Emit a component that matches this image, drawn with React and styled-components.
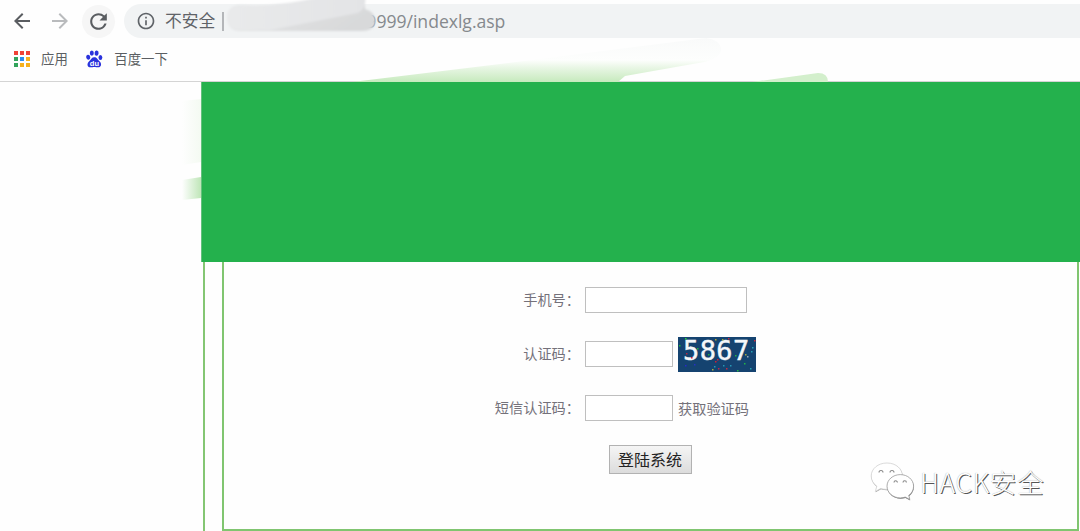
import styled, { createGlobalStyle } from 'styled-components';
import { MdArrowBack, MdArrowForward, MdRefresh, MdInfoOutline } from 'react-icons/md';

const GlobalStyle = createGlobalStyle`
  * {
    box-sizing: border-box;
  }

  body {
    margin: 0;
    background-color: #fefefe;
    font-family: 'Noto Sans', 'Noto Sans CJK SC', sans-serif;
    overflow: hidden;
  }
`;

const Window = styled.div`
  position: relative;
  display: flex;
  flex-direction: column;
  height: 531px;
  overflow: hidden;
`;

const Toolbar = styled.div`
  display: flex;
  align-items: center;
  height: 38px;
  padding: 4px 0 0 10px;
  flex-shrink: 0;
`;

const NavButton = styled.button`
  display: flex;
  align-items: center;
  justify-content: center;
  width: ${(props) => (props.$round ? '33px' : '24px')};
  height: 33px;
  margin-right: ${(props) => props.$gap}px;
  padding: 0;
  border: none;
  border-radius: 50%;
  background-color: ${(props) => (props.$round ? '#f6f6f6' : 'transparent')};
  color: ${(props) => (props.$muted ? '#b9bbbd' : '#5a5d61')};
`;

const AddressBar = styled.div`
  display: flex;
  align-items: center;
  flex: 1;
  height: 34px;
  padding-left: 12px;
  border-radius: 17px 0 0 17px;
  background-color: #f1f3f4;
  color: #5f6368;
`;

const Insecure = styled.span`
  margin-left: 9px;
  font-size: 16.8px;
  line-height: 34px;
  white-space: nowrap;
`;

const Divider = styled.i`
  width: 2px;
  height: 19px;
  margin-left: 7px;
  background-color: #b4b6b9;
`;

const Address = styled.span`
  margin-left: 142px;
  font-family: 'Open Sans', 'Noto Sans', sans-serif;
  font-size: 17.6px;
  line-height: 34px;
  letter-spacing: -0.02px;
  color: #85898d;
`;

const Bookmarks = styled.div`
  display: flex;
  align-items: center;
  height: 44px;
  padding: 0 0 1px 14px;
  border-bottom: 1px solid #d4d4d4;
  flex-shrink: 0;
`;

const Bookmark = styled.span`
  display: flex;
  align-items: center;
  gap: 11px;
  margin-right: 18.5px;
  font-size: 13.4px;
  line-height: 20px;
  color: #5b5e62;
`;

const AppsGrid = styled.span`
  display: grid;
  grid-template-columns: repeat(3, 4px);
  gap: 2px;
`;

const AppDot = styled.i`
  height: 4px;
  background-color: ${(props) => props.$color};
`;

const Page = styled.main`
  display: flex;
  flex-direction: column;
  flex: 1;
  margin-left: 201px;
`;

const Banner = styled.div`
  height: 180px;
  border-left: 1px solid #62c17c;
  background-color: #24b14d;
  flex-shrink: 0;
`;

const OuterFrame = styled.div`
  flex: 1;
  margin-left: 2px;
  padding: 0 1px 0 17px;
  border-left: 2px solid #84c673;
`;

const InnerFrame = styled.div`
  height: 269px;
  padding-top: 25px;
  border: 2px solid #80c570;
  border-top: none;
`;

const Form = styled.form`
  display: grid;
  grid-template-columns: 356px auto;
  grid-auto-rows: 26px;
  row-gap: 28px;
  column-gap: 5px;
`;

const Label = styled.label`
  font-family: 'Noto Sans CJK SC', sans-serif;
  font-size: 14.2px;
  font-weight: 400;
  line-height: 25px;
  color: #74717a;
  text-align: right;
  white-space: nowrap;
`;

const Field = styled.div`
  display: flex;
  align-items: center;
  gap: 5px;
`;

const Input = styled.input`
  width: ${(props) => props.$width}px;
  height: 26px;
  padding: 0 4px;
  border: 1px solid #bfbfbf;
  background-color: #fff;
  outline: none;
`;

const Captcha = styled.div`
  position: relative;
  width: 78px;
  height: 35px;
  background-color: #154370;
`;

const Digits = styled.span`
  display: block;
  padding-left: 5px;
  font-family: 'DejaVu Sans Mono', monospace;
  font-size: 27px;
  line-height: 27px;
  letter-spacing: 0.4px;
  color: #f4f7fa;
  -webkit-text-stroke: 0.4px #f4f7fa;
`;

const Noise = styled.svg`
  position: absolute;
  inset: 0;
`;

const Submit = styled.button`
  justify-self: start;
  grid-column: 2;
  width: 83px;
  height: 29px;
  margin: -4px 0 0 23.5px;
  padding: 0;
  border: 1px solid #b2b2b2;
  background: linear-gradient(#f5f5f5, #dcdcdc);
  font-family: 'Noto Sans CJK SC', sans-serif;
  font-size: 16px;
  line-height: 25px;
  color: #222;
`;

const Smear = styled.svg`
  position: absolute;
  left: 0;
  top: 0;
  pointer-events: none;
`;

const Watermark = styled.div`
  position: absolute;
  left: 868px;
  top: 460px;
  display: flex;
  align-items: flex-start;
  gap: 4px;
`;

const WatermarkText = styled.span`
  font-family: 'Noto Sans CJK SC', sans-serif;
  font-size: 26.6px;
  font-weight: 300;
  line-height: 44px;
  letter-spacing: 0.6px;
  color: #fff;
  text-shadow: 1px 1px 0 #555, 0 0 1px #999;
  white-space: nowrap;
`;

const dotColors = [
  '#ef4337', '#ef4337', '#ef4337',
  '#32a45b', '#2a8cf0', '#f6b01c',
  '#32a45b', '#f6b01c', '#f6b01c',
];

const specks = [
  [7, 1, '#23d43a'], [1, 8, '#18b43b'], [8, 16, '#b72941'], [13, 20, '#d31b36'],
  [7, 28, '#2727ce'], [16, 27, '#2631c4'], [19, 11, '#20b943'], [37, 2, '#b9a532'],
  [44, 2, '#a9aa2e'], [50, 1, '#c62841'], [37, 24, '#d31d35'], [39, 22, '#d31d35'],
  [36, 29, '#2699b1'], [40, 31, '#bd2547'], [45, 28, '#2794b2'], [52, 28, '#2797b5'],
  [57, 18, '#22b447'], [67, 17, '#a5a340'], [66, 26, '#23b545'], [72, 31, '#25a2b4'],
  [74, 10, '#28a4b6'], [76, 3, '#c92c40'], [73, 14, '#24a1b4'], [59, 33, '#26b546'],
  [34, 32, '#b0ab38'], [30, 17, '#23ad42'], [48, 31, '#c12d44'], [69, 19, '#9aa9b8'],
];

function BaiduIcon() {
  return (
    <svg width="17" height="18" viewBox="0 0 17 18">
      <g fill="#2a32dc">
        <ellipse cx="2.2" cy="7.2" rx="2" ry="2.5" transform="rotate(-10 2.2 7.2)" />
        <ellipse cx="5.8" cy="3.1" rx="2" ry="2.7" />
        <ellipse cx="10.6" cy="3.1" rx="2" ry="2.7" transform="rotate(8 10.6 3.1)" />
        <ellipse cx="14.4" cy="7.4" rx="1.9" ry="2.5" />
        <path d="M8.3 7.2c2.7 0 3 2.2 4.9 3.7 3.2 2.6 2 6.5-1.2 6.4-1.5 0-2.2-.4-3.7-.4s-2.2.5-3.8.4C.9 17.2.6 13.3 3.4 10.9 5.3 9.4 5.7 7.2 8.3 7.2z" />
      </g>
      <text x="8.4" y="15.5" fill="#fff" fontSize="7.5" fontWeight="700" fontFamily="Liberation Sans, sans-serif" textAnchor="middle">du</text>
    </svg>
  );
}

const bigBubble = 'M19 3C10 3 3.2 8.8 3.2 16c0 4.3 2.2 7.8 5.6 10.2L7.3 31.5l5.4-3c2 .6 4.1.9 6.3.9 9 0 15.5-5.9 15.5-13.2S28 3 19 3z';
const smallBubble = 'M32.3 14.6C25 14.6 19 19.7 19 26.2s6 11.7 13.3 11.7c1.8 0 3.4-.3 4.9-.8l4.7 2.4-1.2-4.1c2.9-2.1 4.9-5.4 4.9-9.2 0-6.5-6-11.6-13.3-11.6z';

function WechatIcon() {
  return (
    <svg width="48" height="44" viewBox="0 0 48 44">
      <path d={bigBubble} fill="#999" transform="translate(.3 .8)" />
      <path d={bigBubble} fill="#fff" stroke="#d0d0d0" strokeWidth="0.8" />
      <path d={smallBubble} fill="#777" transform="translate(.3 .9)" />
      <path d={smallBubble} fill="#fff" stroke="#999" strokeWidth="0.8" />
      <path
        d="M11 12.5a2 2 0 0 1 4 0M22 12.5a2 2 0 0 1 4 0M26 22.5a1.6 1.6 0 0 1 3.4 0M35 22.5a1.6 1.6 0 0 1 3.4 0"
        fill="none"
        stroke="#888"
        strokeWidth="1.1"
      />
    </svg>
  );
}

function BrushMarks() {
  return (
    <Smear width="1080" height="263" viewBox="0 0 1080 263">
      <defs>
        <filter id="soft">
          <feGaussianBlur stdDeviation="1" />
        </filter>
        <linearGradient id="grey" x1="0" y1="0" x2="1" y2="0.3">
          <stop offset="0" stopColor="#eaebec" />
          <stop offset="0.6" stopColor="#dedfe0" />
          <stop offset="1" stopColor="#d8d9da" />
        </linearGradient>
        <linearGradient id="greyTop" x1="0" y1="0" x2="1" y2="0">
          <stop offset="0" stopColor="#e9eaeb" />
          <stop offset="1" stopColor="#e3e4e6" />
        </linearGradient>
        <linearGradient id="green" gradientUnits="userSpaceOnUse" x1="0" y1="38" x2="0" y2="82">
          <stop offset="0" stopColor="#f9fafa" />
          <stop offset="0.5" stopColor="#fdfefd" />
          <stop offset="0.68" stopColor="#e8f6e4" />
          <stop offset="1" stopColor="#c6eabd" />
        </linearGradient>
        <linearGradient id="side" x1="0" y1="0" x2="1" y2="0">
          <stop offset="0" stopColor="#fefefe" />
          <stop offset="1" stopColor="#bfe6b8" />
        </linearGradient>
        <linearGradient id="sideFaint" x1="0" y1="0" x2="1" y2="0">
          <stop offset="0" stopColor="#fefefe" />
          <stop offset="1" stopColor="#f4faf2" />
        </linearGradient>
      </defs>
      <g filter="url(#soft)">
        <path d="M227 18Q227 6 240 5Q272 8 320 0H365V9Q375 12 375 20Q375 31 362 31H240Q228 31 227 18z" fill="url(#grey)" />
        <path d="M227 18Q227 6 240 5Q272 8 320 -3H365Q367 8 358 13L270 30H240Q228 30 227 18z" fill="url(#greyTop)" />
      </g>
      <path d="M352 82L500 64L706 38Q721 40 721 50Q720 58 704 62L625 76L618 82z" fill="url(#green)" />
      <path d="M752 82L818 73Q828 73 828 82z" fill="#d3efcc" />
      <path d="M182 101L201 99V162L182 165z" fill="url(#sideFaint)" />
      <path d="M182 180L201 177V198L182 200z" fill="url(#side)" />
    </Smear>
  );
}

function BrowserChrome() {
  return (
    <>
      <Toolbar>
        <NavButton $gap={14}><MdArrowBack size={24} /></NavButton>
        <NavButton $gap={10} $muted><MdArrowForward size={24} /></NavButton>
        <NavButton $gap={9} $round><MdRefresh size={25} /></NavButton>
        <AddressBar>
          <MdInfoOutline size={20} />
          <Insecure>不安全</Insecure>
          <Divider />
          <Address>9999/indexlg.asp</Address>
        </AddressBar>
      </Toolbar>
      <Bookmarks>
        <Bookmark>
          <AppsGrid>
            {dotColors.map((color, i) => <AppDot key={i} $color={color} />)}
          </AppsGrid>
          应用
        </Bookmark>
        <Bookmark>
          <BaiduIcon />
          百度一下
        </Bookmark>
      </Bookmarks>
    </>
  );
}

function LoginForm() {
  return (
    <Form>
      <Label>手机号：</Label>
      <Field>
        <Input $width={162} />
      </Field>
      <Label>认证码：</Label>
      <Field>
        <Input $width={88} />
        <Captcha>
          <Digits>5867</Digits>
          <Noise width="78" height="35">
            {specks.map(([x, y, color]) => (
              <rect key={`${x}-${y}`} x={x} y={y} width="1.5" height="1.5" fill={color} />
            ))}
          </Noise>
        </Captcha>
      </Field>
      <Label>短信认证码：</Label>
      <Field>
        <Input $width={88} />
        <Label as="span">获取验证码</Label>
      </Field>
      <Submit type="button">登陆系统</Submit>
    </Form>
  );
}

function App() {
  return (
    <Window lang="zh-CN">
      <GlobalStyle />
      <BrowserChrome />
      <Page>
        <Banner />
        <OuterFrame>
          <InnerFrame>
            <LoginForm />
          </InnerFrame>
        </OuterFrame>
      </Page>
      <BrushMarks />
      <Watermark>
        <WechatIcon />
        <WatermarkText>HACK安全</WatermarkText>
      </Watermark>
    </Window>
  );
}

export default App;
